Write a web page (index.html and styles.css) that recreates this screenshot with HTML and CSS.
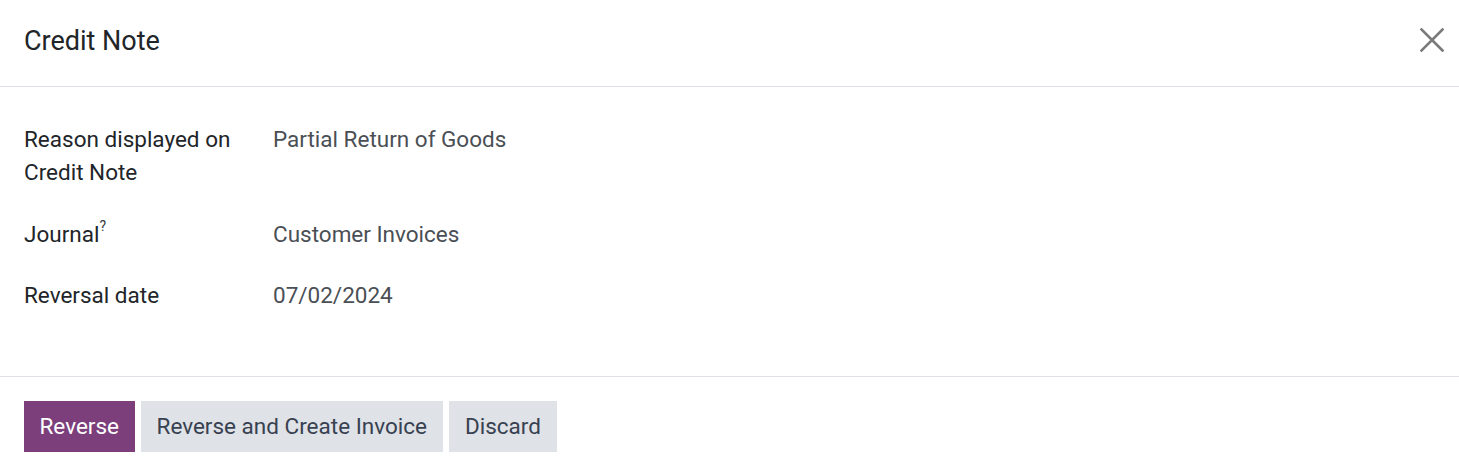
FILE: index.html
```html
<!DOCTYPE html>
<html lang="en">
<head>
<meta charset="utf-8">
<title>Credit Note</title>
<link rel="stylesheet" href="styles.css">
</head>
<body>
<div class="modal">
  <header class="modal-header">
    <h4 class="modal-title">Credit Note</h4>
    <button class="btn-close" aria-label="Close">
      <svg viewBox="0 0 24 24" width="24" height="24" aria-hidden="true">
        <path d="M1.5 1.5 L22.5 22.5 M22.5 1.5 L1.5 22.5" stroke="#7a7a7a" stroke-width="2.6" fill="none" stroke-linecap="square"/>
      </svg>
    </button>
  </header>
  <main class="modal-body">
    <div class="form-grid">
      <div class="label">Reason displayed on Credit Note</div>
      <div class="value">Partial Return of Goods</div>

      <div class="label">Journal<sup class="help">?</sup></div>
      <div class="value">Customer Invoices</div>

      <div class="label">Reversal date</div>
      <div class="value">07/02/2024</div>
    </div>
  </main>
  <footer class="modal-footer">
    <button class="btn btn-primary">Reverse</button>
    <button class="btn btn-secondary">Reverse and Create Invoice</button>
    <button class="btn btn-secondary">Discard</button>
  </footer>
</div>
</body>
</html>
```

FILE: styles.css
```css
* {
  box-sizing: border-box;
}

html, body {
  margin: 0;
  padding: 0;
  background: #ffffff;
}

body {
  font-family: Roboto, "Noto Sans", "Liberation Sans", sans-serif;
  color: #212529;
  font-size: 22.5px;
  line-height: 33px;
}

.modal {
  display: flex;
  flex-direction: column;
  min-height: 472px;
}

.modal-header {
  display: flex;
  align-items: center;
  justify-content: space-between;
  padding: 25px 15px 29px 24px;
  border-bottom: 1px solid #dee2e6;
}

.modal-title {
  margin: 0;
  font-size: 27px;
  line-height: 32px;
  font-weight: 400;
  color: #212529;
}

.btn-close {
  display: flex;
  align-items: center;
  justify-content: center;
  width: 24px;
  height: 24px;
  padding: 0;
  margin: 0 0 2px 0;
  border: 0;
  background: transparent;
  cursor: pointer;
}

.btn-close svg {
  display: block;
}

.modal-body {
  padding: 36px 24px 64px 24px;
}

.form-grid {
  display: grid;
  grid-template-columns: 249px 1fr;
  row-gap: 28.5px;
}

.label {
  color: #212529;
  padding-right: 16px;
}

.value {
  color: #4a4f55;
}

.help {
  font-size: 14px;
  line-height: 0;
  vertical-align: 0;
  position: relative;
  top: -11px;
  margin-left: 0;
  color: #343a40;
}

.modal-footer {
  display: flex;
  gap: 6px;
  padding: 24px 24px 20px 24px;
  border-top: 1px solid #dee2e6;
}

.btn {
  font-family: inherit;
  font-size: 22.5px;
  line-height: 33px;
  padding: 9px 16px;
  border: 0;
  border-radius: 0;
  cursor: pointer;
}

.btn-primary {
  background: #7c3f7c;
  color: #ffffff;
  padding: 9px 15.5px;
}

.btn-secondary {
  background: #dfe2e6;
  color: #374151;
}
```
